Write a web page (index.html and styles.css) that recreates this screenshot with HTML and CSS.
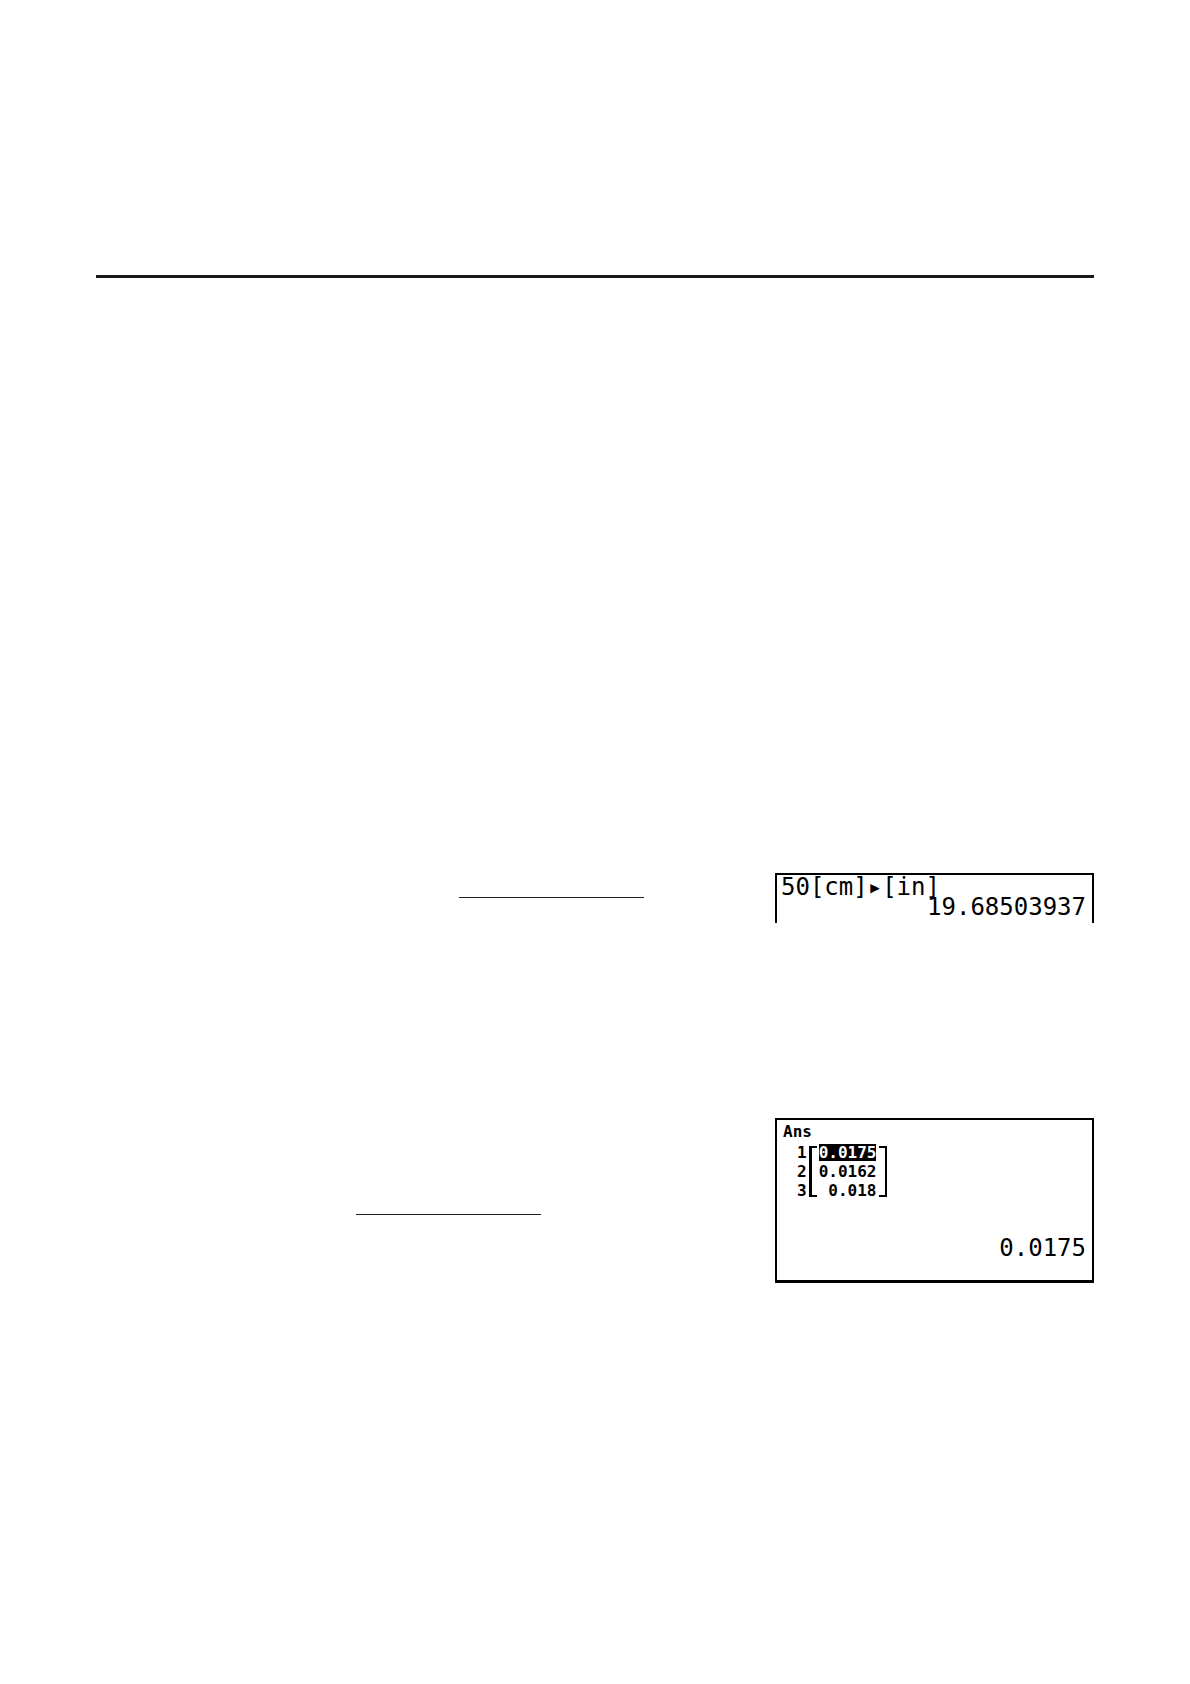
FILE: index.html
```html
<!DOCTYPE html>
<html lang="en">
<head>
<meta charset="utf-8">
<title>Unit conversion</title>
<link rel="stylesheet" href="styles.css">
</head>
<body>
<main class="page">
  <hr class="rule">
  <section class="example example-length">
    <div class="blank"></div>
    <div class="screen screen-open">
      <div class="entry">50[cm]▸[in]</div>
      <div class="result">19.68503937</div>
    </div>
  </section>
  <section class="example example-list">
    <div class="blank"></div>
    <div class="screen">
      <div class="caption">Ans</div>
      <table class="matrix">
        <tr>
          <th scope="row">1</th>
          <td rowspan="3"><div class="bracket bracket-left"></div></td>
          <td class="value"><span class="selected">0.0175</span></td>
          <td rowspan="3"><div class="bracket bracket-right"></div></td>
        </tr>
        <tr><th scope="row">2</th><td class="value">0.0162</td></tr>
        <tr><th scope="row">3</th><td class="value">0.018</td></tr>
      </table>
      <div class="result result-low">0.0175</div>
    </div>
  </section>
</main>
</body>
</html>
```
FILE: styles.css
```css
body {
  margin: 0;
  background: #fff;
  color: #000;
  font-family: "DejaVu Sans Mono", "Liberation Mono", monospace;
}

.page {
  padding: 275px 96px 400px;
}

.rule {
  height: 3px;
  margin: 0;
  border: 0;
  background: #19191b;
}

.example {
  display: flex;
  justify-content: space-between;
  align-items: flex-start;
}

.example-length {
  padding: 595px 0 0 363px;
}

.example-list {
  padding: 195px 0 0 260px;
}

.blank {
  width: 185px;
  border-bottom: 1px solid #222;
}

.example-length .blank {
  margin-top: 24px;
}

.example-list .blank {
  margin-top: 96px;
}

.screen {
  box-sizing: border-box;
  width: 319px;
  padding: 2px 6px 22px 4px;
  border: 2px solid #000;
  border-bottom-width: 3px;
  font-size: 24px;
  line-height: 20px;
}

.screen-open {
  padding-bottom: 6px;
  border-bottom: 0;
}

.result {
  text-align: right;
}

.result-low {
  margin-top: 38px;
}

.caption,
.matrix {
  font-size: 16px;
  font-weight: bold;
  line-height: 19px;
}

.caption {
  padding-left: 2px;
}

.matrix {
  margin: 2px 0 0 16px;
  border-collapse: collapse;
}

.matrix th,
.matrix td {
  height: 19px;
  padding: 0;
}

.matrix th {
  padding-right: 2px;
}

.matrix .value {
  padding: 0 3px 0 2px;
  text-align: right;
}

.selected {
  display: block;
  background: #000;
  color: #fff;
  line-height: 17px;
}

.bracket {
  box-sizing: border-box;
  width: 8px;
  height: 51px;
  border: 2px solid #000;
}

.bracket-left {
  border-left-width: 3px;
  border-right: 0;
}

.bracket-right {
  border-left: 0;
}
```
